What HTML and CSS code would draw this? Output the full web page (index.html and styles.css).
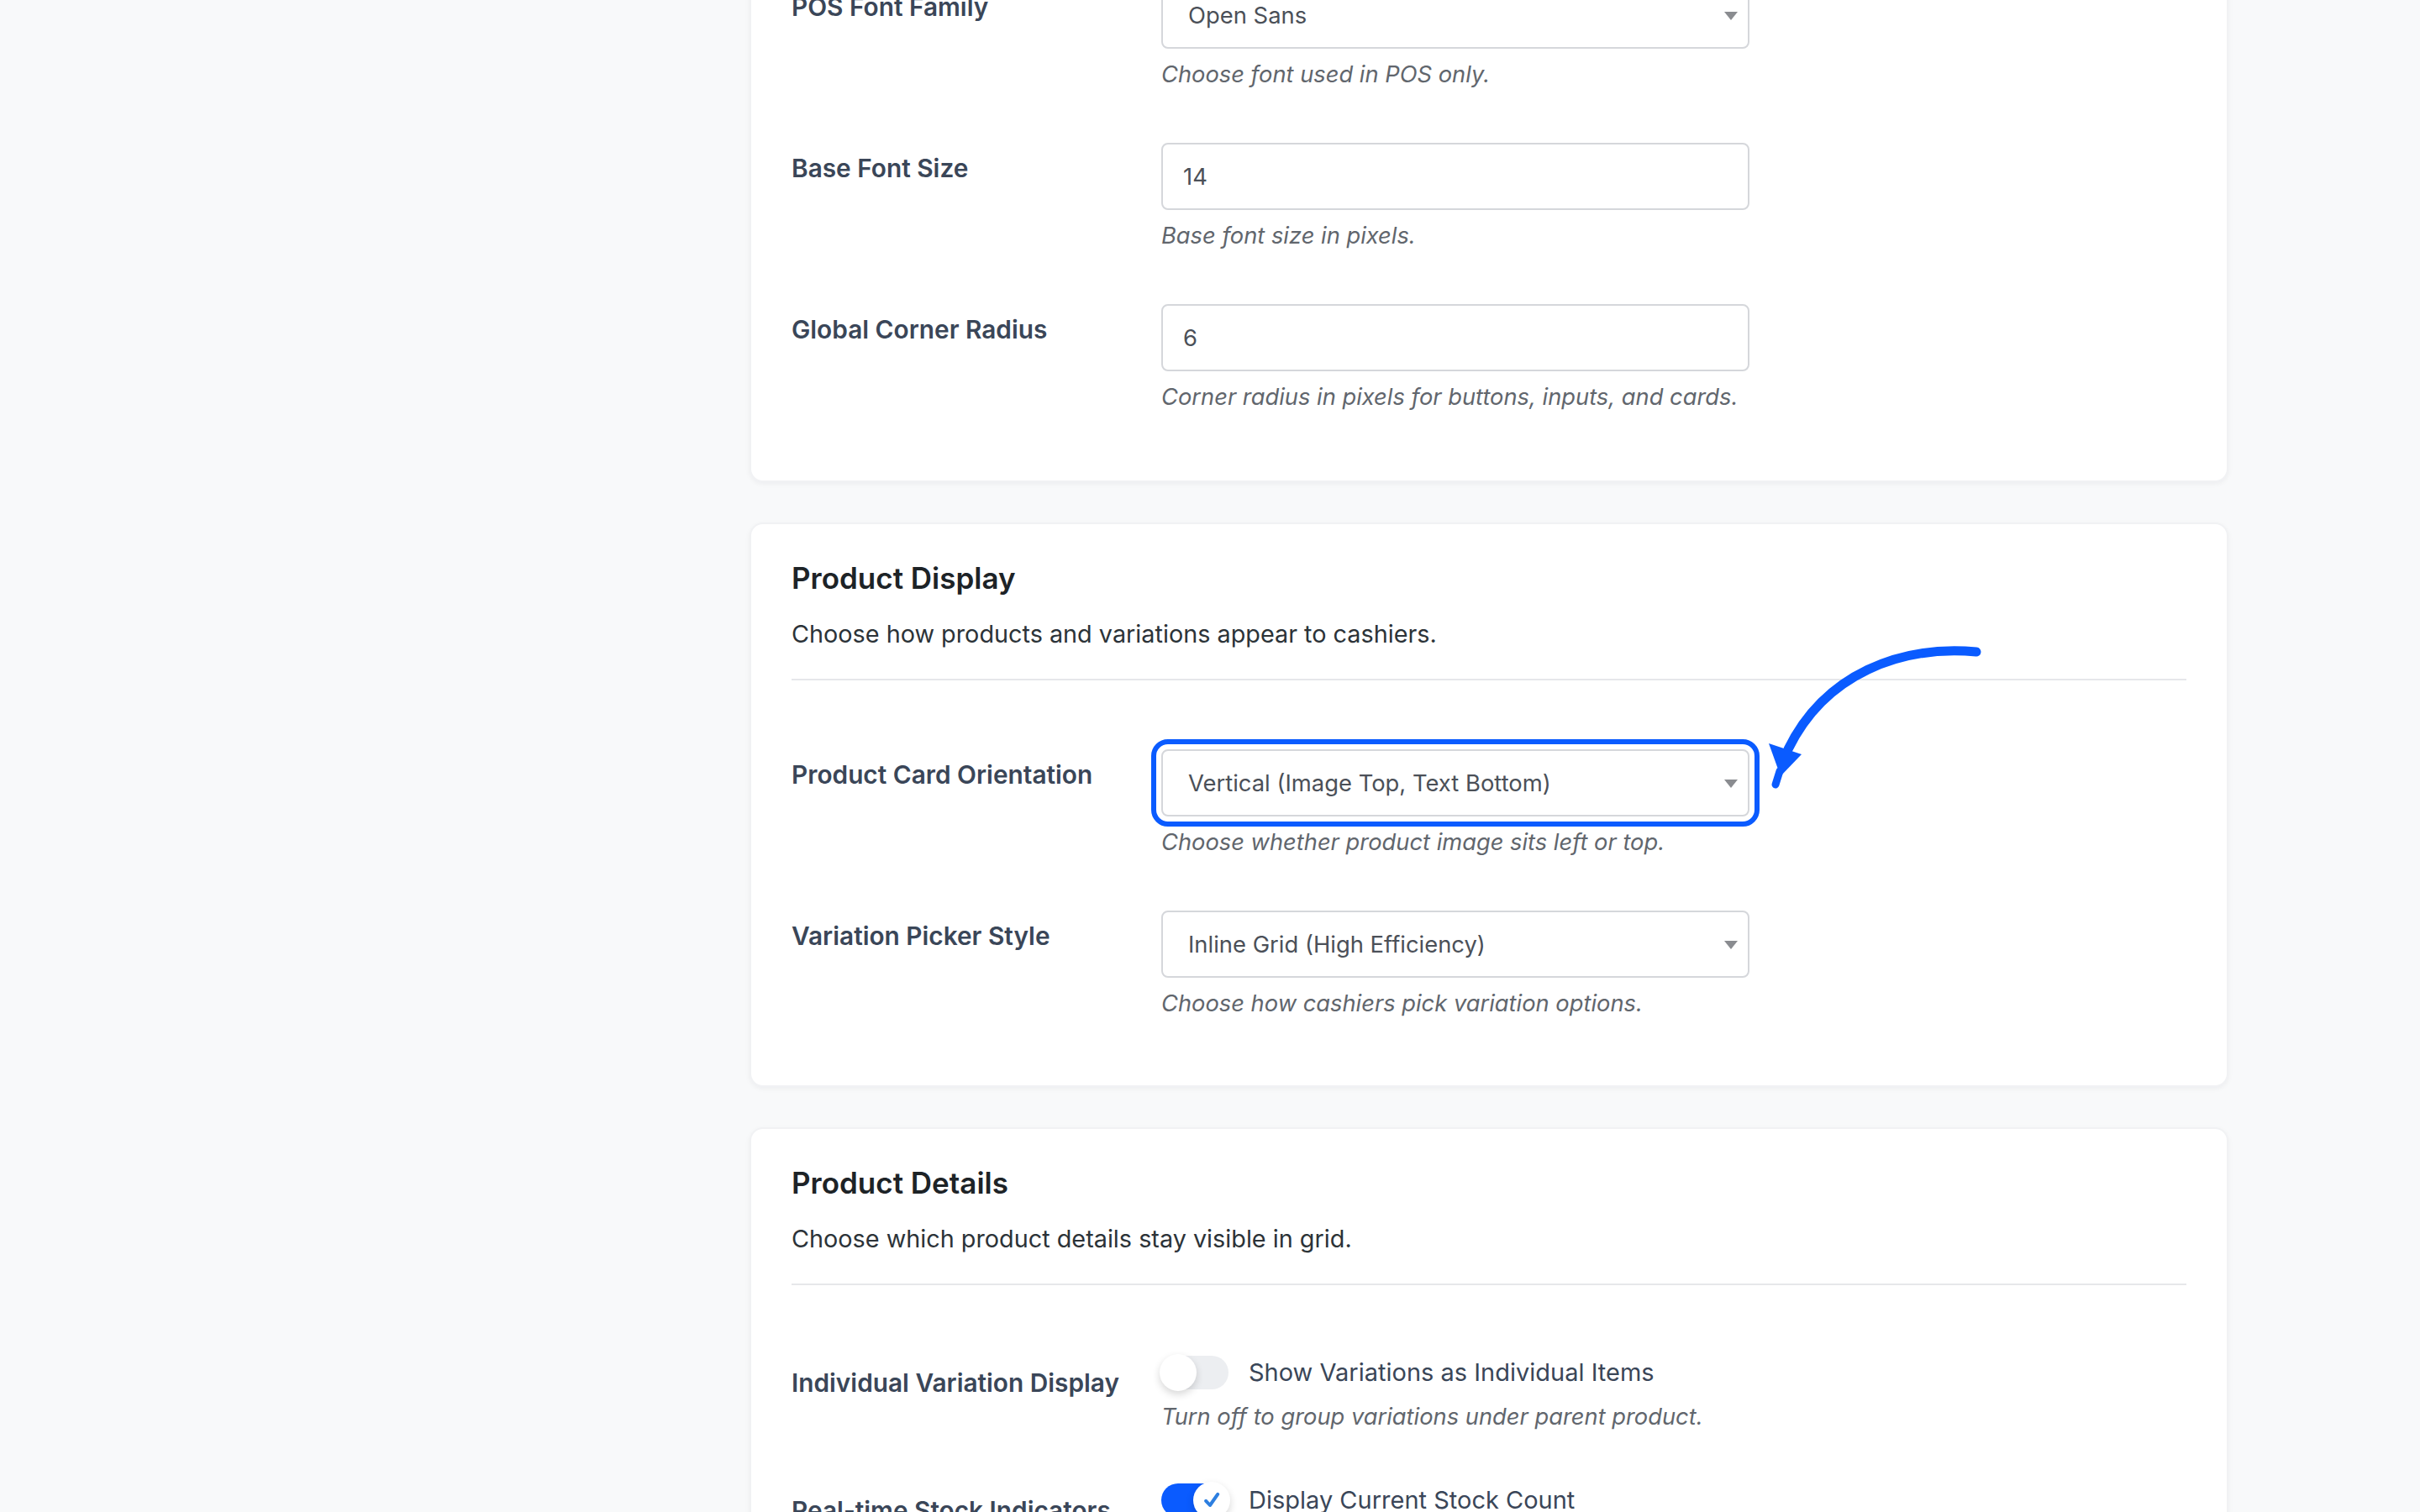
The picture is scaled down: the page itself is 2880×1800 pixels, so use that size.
FILE: index.html
```html
<!DOCTYPE html>
<html lang="en">
<head>
<meta charset="utf-8">
<title>POS Settings</title>
<link rel="stylesheet" href="styles.css">
</head>
<body>
<main class="settings">
  <section class="card card--scrolled">
    <div class="fields">
      <div class="row">
        <div class="row-label">POS Font Family</div>
        <div class="row-field">
          <span class="select"><select><option>Open Sans</option></select></span>
          <p class="help">Choose font used in POS only.</p>
        </div>
      </div>
      <div class="row">
        <div class="row-label">Base Font Size</div>
        <div class="row-field">
          <input class="text-input" type="text" value="14">
          <p class="help">Base font size in pixels.</p>
        </div>
      </div>
      <div class="row">
        <div class="row-label">Global Corner Radius</div>
        <div class="row-field">
          <input class="text-input" type="text" value="6">
          <p class="help">Corner radius in pixels for buttons, inputs, and cards.</p>
        </div>
      </div>
    </div>
  </section>

  <section class="card card--annotated">
    <header class="card-head">
      <h2 class="card-title">Product Display</h2>
      <p class="card-desc">Choose how products and variations appear to cashiers.</p>
    </header>
    <div class="fields">
      <div class="row">
        <div class="row-label">Product Card Orientation</div>
        <div class="row-field">
          <span class="select select--highlight"><select><option>Vertical (Image Top, Text Bottom)</option></select></span>
          <p class="help">Choose whether product image sits left or top.</p>
        </div>
      </div>
      <div class="row">
        <div class="row-label">Variation Picker Style</div>
        <div class="row-field">
          <span class="select"><select><option>Inline Grid (High Efficiency)</option></select></span>
          <p class="help">Choose how cashiers pick variation options.</p>
        </div>
      </div>
    </div>
    <svg class="annotation-arrow" viewBox="0 0 140 100" width="140" height="100" aria-hidden="true">
      <path d="M129 11 C84 7 39 24 17 69" fill="none" stroke="#0a5bff" stroke-width="5.5" stroke-linecap="round"/>
      <path d="M5.5 65.5 L25 72 L12.5 85 Z" fill="#0a5bff"/>
      <path d="M12 82 L9.5 90" fill="none" stroke="#0a5bff" stroke-width="4.5" stroke-linecap="round"/>
    </svg>
  </section>

  <section class="card card--last">
    <header class="card-head">
      <h2 class="card-title">Product Details</h2>
      <p class="card-desc">Choose which product details stay visible in grid.</p>
    </header>
    <div class="fields">
      <div class="row row--toggle">
        <div class="row-label">Individual Variation Display</div>
        <div class="row-field">
          <div class="switch-line">
            <span class="switch"><span class="knob"></span></span>
            <span class="switch-text">Show Variations as Individual Items</span>
          </div>
          <p class="help">Turn off to group variations under parent product.</p>
        </div>
      </div>
      <div class="row row--toggle">
        <div class="row-label">Real-time Stock Indicators</div>
        <div class="row-field">
          <div class="switch-line">
            <span class="switch is-on"><span class="knob"><svg viewBox="0 0 12 12" width="12" height="12"><path d="M2.6 6.4 L5 9 L9.6 2.4" fill="none" stroke="#2d7fe0" stroke-width="2" stroke-linecap="round" stroke-linejoin="round"/></svg></span></span>
            <span class="switch-text">Display Current Stock Count</span>
          </div>
        </div>
      </div>
    </div>
  </section>
</main>
</body>
</html>
```

FILE: styles.css
```css
html {
  zoom: 2;
  background: #f8f9fa;
}

body {
  margin: 0;
  font-family: Inter, "Liberation Sans", Arial, sans-serif;
  font-size: 14px;
  color: #2c3338;
  -webkit-font-smoothing: antialiased;
}

.settings {
  width: 880px;
  margin-left: 446px;
  display: flex;
  flex-direction: column;
  gap: 24px;
  padding-bottom: 40px;
}

.card {
  background: #fff;
  border: 1px solid #f1f2f4;
  border-radius: 8px;
  box-shadow: 0 1px 3px rgba(16, 24, 40, 0.05);
  padding: 0 24px 23px;
}

.card--scrolled {
  margin-top: -54px;
  padding-bottom: 24px;
}

.card--scrolled .fields {
  padding-top: 27px;
}

.card--annotated {
  position: relative;
}

.card-head {
  padding: 21px 0 16px;
  border-bottom: 1px solid #e6e7ea;
}

.card-title {
  margin: 0;
  font-size: 17.5px;
  line-height: 22px;
  font-weight: 600;
  color: #1d2327;
}

.card-desc {
  margin: 12px 0 0;
  font-size: 14.4px;
  line-height: 21px;
  color: #2c3338;
}

.fields {
  padding-top: 26px;
}

.row {
  display: grid;
  grid-template-columns: 220px 1fr;
  padding: 15px 0;
}

.row-label {
  padding-top: 6px;
  font-size: 14.9px;
  line-height: 18px;
  font-weight: 600;
  color: #3a4658;
}

.row-field {
  min-width: 0;
}

.help {
  margin: 5px 0 0;
  font-size: 13.65px;
  line-height: 21px;
  font-style: italic;
  color: #61666d;
}

.text-input,
.select select {
  box-sizing: border-box;
  display: block;
  width: 350px;
  height: 40px;
  margin: 0;
  border: 1px solid #d5d7db;
  border-radius: 4px;
  background: #fff;
  font-family: inherit;
  font-size: 13.7px;
  color: #4b5058;
  outline: none;
}

.text-input {
  padding: 0 12px;
}

.select {
  position: relative;
  display: block;
  width: 350px;
  border-radius: 4px;
}

.select select {
  -webkit-appearance: none;
  appearance: none;
  padding: 0 24px 0 15px;
}

.select::after {
  content: "";
  position: absolute;
  right: 7px;
  top: 50%;
  margin-top: -2px;
  border-left: 4px solid transparent;
  border-right: 4px solid transparent;
  border-top: 5px solid #8a8c90;
}

.select--highlight {
  outline: 3px solid #0a5bff;
  outline-offset: 3px;
}

.annotation-arrow {
  position: absolute;
  left: 600px;
  top: 65px;
  overflow: visible;
  pointer-events: none;
}

.row--toggle {
  padding: 15px 0 13px;
}

.row--toggle .row-label {
  padding-top: 8px;
}

.switch-line {
  display: flex;
  align-items: center;
  gap: 12px;
  height: 22px;
}

.switch {
  box-sizing: border-box;
  display: flex;
  align-items: center;
  justify-content: flex-start;
  width: 40px;
  height: 20px;
  border-radius: 10px;
  background: #eceef1;
  flex: none;
}

.switch.is-on {
  justify-content: flex-end;
  background: #0a5bff;
}

.knob {
  display: flex;
  align-items: center;
  justify-content: center;
  width: 22px;
  height: 22px;
  margin: 0 -1px;
  border-radius: 50%;
  background: #fff;
  box-shadow: 0 2px 5px rgba(0, 0, 0, 0.16);
}

.switch-text {
  font-size: 14.5px;
  line-height: 22px;
  color: #3a4658;
}
```
